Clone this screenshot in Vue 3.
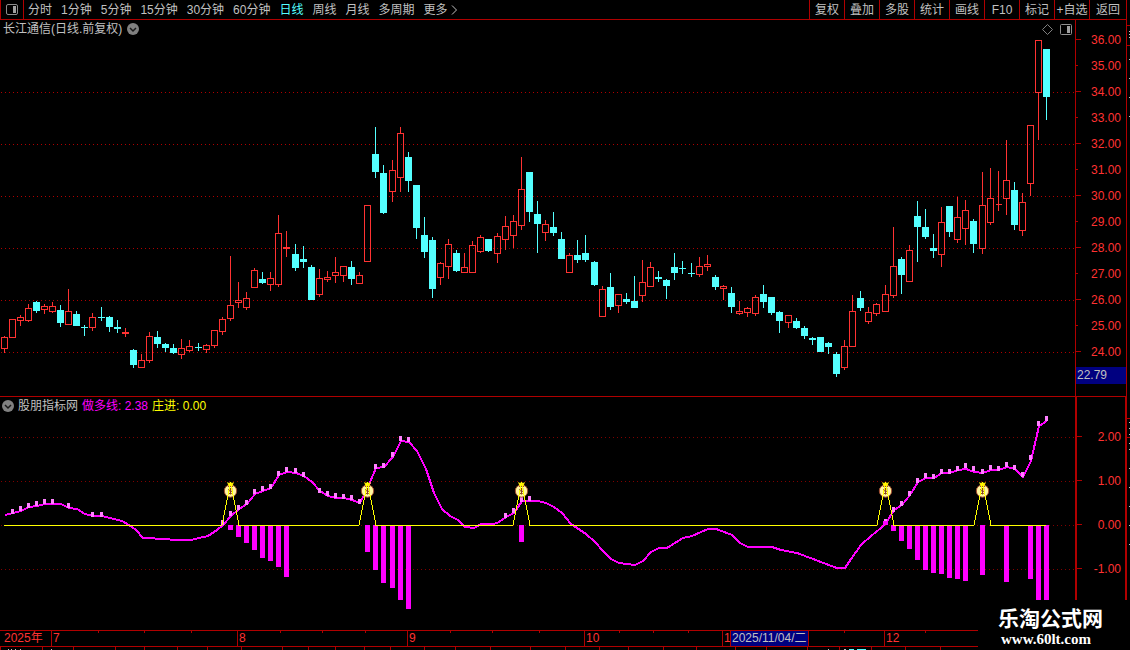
<script setup>
import { ref, computed } from 'vue'

const periods = ['分时', '1分钟', '5分钟', '15分钟', '30分钟', '60分钟', '日线', '周线', '月线', '多周期']
const activePeriod = ref('日线')
const tools = ['复权', '叠加', '多股', '统计', '画线', 'F10', '标记', '+自选', '返回']

const prices = [36, 35, 34, 33, 32, 31, 30, 29, 28, 27, 26, 25, 24]
const levels = [2, 1, 0, -1]

const months = ['2025年', '7', '8', '9', '10', '1', '12']
const weekTicks = [98, 144, 191, 280, 322, 365, 450, 492, 539, 619, 653, 688, 844, 925]
const lowerTicks = [0, 42, 73, 115, 144, 177, 207, 241, 282, 308, 335, 364, 390, 424, 455, 490, 530, 565, 599, 628, 663, 696, 735, 766, 807, 839, 871, 905, 940]

// high, body top, body bottom, low, 1 = up / 0 = down
const candles = [
  [336, 337, 349, 353, 1], [319, 319, 338, 338, 1], [315, 317, 321, 326, 1], [304, 308, 321, 322, 1],
  [301, 302, 311, 313, 0], [304, 306, 310, 314, 1], [302, 306, 312, 313, 1], [305, 310, 323, 327, 0],
  [289, 311, 325, 325, 1], [311, 314, 326, 326, 0], [325, 327, 328, 336, 0], [313, 317, 328, 331, 1],
  [307, 317, 318, 321, 0], [316, 317, 327, 332, 0], [320, 327, 329, 333, 0], [328, 332, 334, 337, 1],
  [349, 350, 365, 368, 0], [354, 360, 368, 368, 1], [332, 336, 361, 363, 1], [331, 337, 344, 348, 0],
  [343, 344, 348, 352, 0], [344, 348, 353, 354, 0], [339, 348, 355, 359, 1], [340, 346, 351, 352, 1],
  [343, 347, 348, 351, 0], [344, 345, 350, 353, 1], [330, 330, 346, 348, 1], [317, 319, 332, 335, 1],
  [256, 305, 319, 321, 1], [282, 300, 303, 308, 1], [292, 298, 308, 310, 1], [268, 270, 288, 288, 1],
  [272, 279, 283, 284, 0], [272, 278, 285, 291, 1], [215, 233, 285, 287, 1], [231, 247, 249, 257, 1],
  [244, 254, 268, 271, 0], [246, 259, 262, 268, 0], [265, 267, 300, 300, 0], [269, 278, 295, 297, 1],
  [271, 277, 280, 282, 1], [257, 272, 276, 283, 1], [266, 266, 276, 282, 1], [261, 267, 279, 285, 0],
  [272, 275, 284, 284, 1], [205, 205, 262, 262, 1], [127, 154, 172, 178, 0], [165, 173, 213, 214, 0],
  [160, 170, 192, 202, 1], [127, 133, 178, 192, 1], [152, 157, 181, 192, 0], [185, 185, 228, 239, 0],
  [217, 235, 252, 258, 0], [237, 240, 289, 298, 0], [262, 263, 278, 285, 1], [239, 244, 267, 279, 1],
  [250, 253, 271, 272, 0], [253, 267, 273, 273, 1], [241, 245, 273, 273, 1], [235, 237, 252, 253, 1],
  [239, 239, 251, 252, 0], [233, 236, 254, 263, 1], [216, 226, 240, 250, 1], [215, 221, 236, 248, 1],
  [157, 189, 226, 230, 1], [172, 172, 212, 222, 0], [201, 214, 224, 253, 0], [220, 224, 233, 241, 1],
  [212, 227, 233, 236, 0], [232, 239, 259, 259, 0], [253, 255, 273, 273, 1], [240, 255, 260, 263, 0],
  [235, 253, 260, 262, 0], [261, 262, 285, 286, 0], [286, 289, 317, 317, 1], [273, 287, 307, 310, 0],
  [294, 294, 306, 313, 1], [293, 299, 302, 304, 0], [276, 301, 308, 308, 0], [260, 282, 296, 302, 1],
  [262, 267, 287, 287, 1], [271, 277, 279, 282, 0], [279, 280, 286, 299, 0], [253, 267, 273, 280, 0],
  [261, 268, 269, 274, 0], [263, 273, 274, 277, 0], [257, 266, 275, 277, 1], [255, 264, 267, 271, 1],
  [275, 277, 287, 290, 0], [285, 286, 289, 300, 1], [287, 293, 307, 313, 0], [301, 311, 314, 315, 1],
  [307, 308, 313, 317, 1], [295, 297, 314, 316, 1], [285, 294, 302, 308, 0], [297, 297, 313, 315, 0],
  [311, 312, 321, 333, 0], [315, 315, 323, 328, 1], [318, 321, 328, 329, 0], [326, 328, 336, 339, 0],
  [337, 338, 340, 345, 0], [337, 337, 352, 352, 0], [342, 343, 347, 354, 0], [352, 354, 374, 377, 0],
  [340, 346, 368, 370, 1], [295, 311, 347, 347, 1], [291, 298, 308, 311, 0], [307, 312, 322, 324, 1],
  [303, 304, 314, 316, 1], [285, 294, 312, 312, 1], [227, 266, 296, 298, 1], [257, 259, 275, 294, 0],
  [245, 250, 282, 282, 1], [201, 216, 227, 262, 0], [209, 227, 237, 239, 0], [234, 248, 251, 258, 0],
  [207, 222, 255, 267, 1], [206, 206, 232, 237, 0], [197, 217, 240, 243, 1], [200, 210, 229, 245, 1],
  [219, 221, 244, 253, 0], [172, 205, 249, 254, 1], [168, 198, 223, 225, 1], [171, 204, 205, 211, 1],
  [140, 180, 199, 215, 1], [182, 190, 225, 230, 0], [193, 202, 231, 236, 1], [125, 125, 184, 196, 1],
  [40, 40, 93, 140, 1], [49, 49, 97, 120, 0],
]

const barX = (i) => Math.floor(4.079 + i * 8.082)

const shapes = computed(() => candles.map(([high, top, bottom, low, up], i) => {
  const x = barX(i)
  let wick = ''
  if (high < top) wick += `M${x + 0.5} ${high}V${top}`
  if (low > bottom) wick += `M${x + 0.5} ${bottom}V${low}`
  const body = up
    ? `M${x - 2.5} ${top + 0.5}h6V${bottom - 0.5}h-6Z`
    : `M${x - 3} ${top}h7V${bottom}h-7Z`
  return { wick, body, up }
}))

// indicator line
const trend = [
  [4, 515], [12, 513], [20, 511], [28, 507], [36, 506], [44, 504], [52, 504], [60, 504], [68, 508], [76, 509],
  [84, 514], [92, 516], [101, 516], [113, 519], [121, 521], [128, 525], [135, 530], [142, 538], [165, 539],
  [173, 540], [190, 540], [198, 538], [207, 536], [216, 530], [222, 525], [230, 516], [238, 509], [246, 504],
  [254, 494], [262, 491], [270, 488], [278, 475], [286, 472], [295, 473], [303, 476], [311, 482], [319, 491],
  [327, 496], [335, 498], [343, 498], [351, 500], [359, 503], [367, 487], [375, 468], [383, 467], [392, 457],
  [400, 441], [408, 442], [416, 451], [425, 469], [433, 493], [441, 509], [449, 516], [457, 520], [464, 527],
  [473, 528], [480, 524], [493, 524], [498, 522], [505, 517], [513, 513], [521, 501], [529, 501], [537, 501],
  [545, 503], [553, 507], [561, 513], [570, 524], [585, 534], [594, 542], [602, 551], [610, 559], [618, 563],
  [634, 565], [642, 561], [650, 552], [658, 548], [666, 548], [682, 538], [691, 536], [707, 529], [715, 529],
  [731, 535], [739, 543], [747, 547], [771, 547], [780, 550], [796, 553], [812, 559], [836, 568], [844, 568],
  [850, 559], [860, 545], [870, 536], [880, 528], [885, 523], [893, 510], [901, 505], [909, 495], [917, 482],
  [925, 478], [933, 478], [941, 473], [949, 473], [957, 470], [965, 469], [973, 472], [982, 473], [990, 470],
  [998, 470], [1006, 467], [1014, 469], [1022, 477], [1030, 461], [1038, 426], [1046, 421],
]
const trendPoints = trend.map(([x, y]) => `${x + 1},${y}`).join(' ')

const marks = [
  [12, 509], [20, 506], [28, 503], [36, 501], [44, 499], [52, 499], [68, 503], [92, 512], [101, 512],
  [222, 520], [230, 511], [238, 505], [246, 500], [254, 489], [262, 486], [270, 484], [278, 471], [286, 467],
  [295, 468], [303, 472], [319, 488], [327, 491], [335, 493], [343, 494], [351, 495], [359, 499], [375, 464],
  [383, 463], [392, 452], [400, 436], [408, 437], [505, 513], [513, 508], [521, 497], [529, 496],
  [885, 519], [893, 507], [901, 501], [909, 491], [917, 478], [925, 473], [933, 474], [941, 469], [949, 469],
  [957, 466], [965, 463], [973, 466], [982, 469], [990, 465], [998, 466], [1006, 462], [1014, 465],
  [1022, 472], [1030, 455], [1038, 421], [1046, 416],
]

const bars = [
  [230, 530], [238, 537], [246, 543], [254, 550], [262, 558], [270, 561], [278, 567], [286, 577],
  [367, 552], [375, 570], [383, 583], [392, 588], [400, 600], [408, 609], [521, 542],
  [893, 531], [901, 541], [909, 549], [917, 560], [925, 570], [933, 573], [941, 574], [949, 578],
  [957, 579], [965, 581], [982, 575], [1006, 582], [1030, 579], [1038, 600], [1046, 600],
]

const signals = [230, 367, 521, 885, 982]
const signalPath = 'M4 525.5' + signals.map((x) => `H${x - 8}L${x + 0.5} 482L${x + 9} 525.5`).join('') + 'H1046'
</script>

<template>
  <div class="terminal">
    <header class="topbar">
      <button class="panel-btn" aria-label="侧栏">
        <svg width="12" height="12" viewBox="0 0 12 12">
          <rect x="0.5" y="0.5" width="11" height="10" rx="1.5" fill="none" stroke="#8c8c8c" />
          <rect x="7" y="2" width="3" height="7" fill="#a0a0a0" />
        </svg>
      </button>
      <nav class="periods">
        <button
          v-for="p in periods"
          :key="p"
          :class="{ active: p === activePeriod }"
          @click="activePeriod = p"
        >{{ p }}</button>
        <button class="more">
          更多
          <svg width="7" height="10" viewBox="0 0 7 10"><path d="M1 0.5L5.5 5L1 9.5" fill="none" stroke="#c0c0c0" /></svg>
        </button>
      </nav>
      <div class="tools">
        <button v-for="t in tools" :key="t">{{ t }}</button>
      </div>
    </header>

    <section class="pane price">
      <div class="plot">
        <svg class="chart" viewBox="0 20 1075 376" preserveAspectRatio="none" shape-rendering="crispEdges">
          <path v-for="y in [92, 144, 196, 248, 300, 352]" :key="y" class="grid" :d="`M1 ${y + 0.5}H1075`" />
          <g v-for="(c, i) in shapes" :key="i" :class="c.up ? 'up' : 'down'">
            <path v-if="c.wick" class="wick" :d="c.wick" />
            <path class="body" :d="c.body" />
          </g>
        </svg>
        <div class="caption">
          <span>长江通信(日线.前复权)</span>
          <button class="round" aria-label="展开">
            <svg width="12" height="12" viewBox="0 0 12 12">
              <circle cx="6" cy="6" r="6" fill="#808080" />
              <path d="M3 5L6 8L9 5" fill="none" stroke="#181818" stroke-width="1.5" />
            </svg>
          </button>
        </div>
        <div class="corner">
          <svg width="11" height="11" viewBox="0 0 11 11">
            <path d="M5.5 0.5L10.5 5.5L5.5 10.5L0.5 5.5Z" fill="none" stroke="#808080" />
          </svg>
          <svg width="12" height="11" viewBox="0 0 12 11">
            <rect x="0.5" y="0.5" width="11" height="10" rx="1" fill="none" stroke="#909090" />
            <rect x="7" y="2" width="3" height="7" fill="#a0a0a0" />
          </svg>
        </div>
      </div>
      <div class="axis">
        <span v-for="p in prices" :key="p" :class="{ minor: p % 2 }">{{ p.toFixed(2) }}</span>
        <output class="cursor-price">22.79</output>
      </div>
    </section>

    <section class="pane indicator">
      <div class="plot">
        <svg class="chart" viewBox="0 397 1075 233" preserveAspectRatio="none" shape-rendering="crispEdges">
          <path v-for="y in [437, 481, 525, 569]" :key="y" class="grid dim" :d="`M1 ${y + 0.5}H1075`" />
          <polyline class="trend" :points="trendPoints" />
          <rect v-for="[x, y] in marks" :key="x" class="mark" :x="x - 1" :y="y" width="3" height="5" />
          <rect class="bar" x="883" y="521" width="5" height="4" />
          <rect v-for="[x, y] in bars" :key="x" class="bar" :x="x - 2" y="525" width="5" :height="y - 525" />
          <g v-for="x in signals" :key="x" :transform="`translate(${x - 6} 481)`" shape-rendering="auto">
            <circle cx="6.5" cy="10" r="6.2" fill="#fff6a0" stroke="#a04a30" />
            <path d="M3 1L5 2L6.500 1L8 2L10 1L8.500 5H4.500Z" fill="#ffe800" />
            <path d="M4 5.500H9" stroke="#a04a30" />
            <path d="M8.500 8H5.500Q4.500 8 4.500 9Q4.500 10 6.500 10Q8.500 10 8.500 11.500Q8.500 12.500 7.500 12.500H4.500M6.500 7V13.500" fill="none" stroke="#8a4420" />
          </g>
          <path class="signal" :d="signalPath" />
        </svg>
        <div class="caption">
          <button class="round" aria-label="展开">
            <svg width="12" height="12" viewBox="0 0 12 12">
              <circle cx="6" cy="6" r="6" fill="#808080" />
              <path d="M3 5L6 8L9 5" fill="none" stroke="#181818" stroke-width="1.5" />
            </svg>
          </button>
          <span>股朋指标网</span>
          <span class="magenta">做多线: 2.38</span>
          <span class="yellow">庄进: 0.00</span>
        </div>
      </div>
      <div class="axis">
        <span v-for="l in levels" :key="l">{{ l.toFixed(2) }}</span>
      </div>
    </section>

    <footer class="timeline">
      <svg class="chart ticks" viewBox="0 0 1130 15" preserveAspectRatio="none" shape-rendering="crispEdges">
        <rect v-for="x in weekTicks" :key="x" :x="x" y="0" width="1" height="2" />
      </svg>
      <span v-for="m in months" :key="m" class="month">
        {{ m }}
        <time v-if="m === '1'" class="cursor-date" datetime="2025-11-04">2025/11/04/二</time>
      </span>
    </footer>

    <svg class="chart below" viewBox="0 0 1130 3" preserveAspectRatio="none" shape-rendering="crispEdges">
      <rect v-for="x in lowerTicks" :key="x" :x="x" y="0" width="1" height="3" fill="#b00000" />
      <path d="M8 2.500h1m2 0h1m3 0h1m4 0h1m30 0h1M828 2.500h1m15 0h2" stroke="#c0c0c0" />
      <path d="M849 2.500h5m3 0h9" stroke="#54ffff" />
    </svg>

    <svg class="edge" viewBox="0 0 3 600" preserveAspectRatio="none" shape-rendering="crispEdges">
      <path d="M0 25.500H3M0 45.500H3M0 418.500H3M0 437.500H3" stroke="#b00000" />
      <path d="M2.500 31v1m0 2v1m0 2v1m0 21v1m0 18v1m0 18v1m0 18v1m0 305v1m0 5v1m0 5v1m0 8v1m0 5v1m0 18v1m0 18v1m0 18v1m0 18v1m0 18v1" stroke="#c0c0c0" />
    </svg>

    <aside class="watermark">
      <strong>乐淘公式网</strong>
      <a href="#">www.60lt.com</a>
    </aside>
  </div>
</template>

<style>
body {
  margin: 0;
  background: #000;
}
</style>

<style scoped>
.terminal {
  position: relative;
  display: grid;
  grid-template-columns: minmax(0, 1fr);
  grid-template-rows: 20px minmax(0, 377fr) minmax(0, 233fr) 17px 3px;
  height: 100vh;
  overflow: hidden;
  background: #000;
  color: #c0c0c0;
  font-family: "Liberation Sans", "Noto Sans CJK SC", sans-serif;
  font-size: 12px;
  line-height: 18px;
}

button {
  padding: 0;
  border: 0;
  background: none;
  color: inherit;
  font: inherit;
  white-space: nowrap;
  cursor: pointer;
}

.topbar {
  display: flex;
  box-sizing: border-box;
  margin-right: 3px;
  border: solid #b00000;
  border-width: 0 1px 1px;
}

.panel-btn {
  display: flex;
  align-items: center;
  justify-content: center;
  width: 23px;
  border-right: 1px solid #b00000;
}

.periods {
  display: flex;
  flex: 1;
  gap: 9px;
  padding-left: 4px;
}

.periods .active {
  color: #54ffff;
}

.more {
  display: flex;
  align-items: center;
  gap: 3px;
}

.tools {
  display: flex;
}

.tools button {
  width: 35px;
  border-left: 1px solid #b00000;
}

.tools button:last-child {
  width: 37px;
}

.pane {
  display: grid;
  grid-template-columns: minmax(0, 1fr) 52px;
  grid-template-rows: minmax(0, 1fr);
  margin-right: 3px;
}

.price {
  border-bottom: 1px solid #b00000;
}

.plot {
  position: relative;
}

.chart {
  display: block;
  width: 100%;
  height: 100%;
}

.grid {
  stroke: #b00000;
  stroke-dasharray: 1 3;
}

.grid.dim {
  stroke: #800000;
}

.up path {
  fill: none;
  stroke: #ff3232;
}

.down .wick {
  stroke: #54ffff;
}

.down .body {
  fill: #54ffff;
}

.trend {
  fill: none;
  stroke: #ff00ff;
  stroke-width: 2;
}

.mark {
  fill: #ff80ff;
}

.bar {
  fill: #ff00ff;
}

.signal {
  fill: none;
  stroke: #ffff00;
}

.caption {
  position: absolute;
  top: 0;
  left: 0;
  display: flex;
  align-items: center;
  gap: 5px;
  padding-left: 3px;
}

.indicator .caption {
  padding-left: 2px;
  gap: 4px;
}

.round {
  display: flex;
}

.magenta {
  color: #ff00ff;
}

.yellow {
  color: #ffff00;
}

.corner {
  position: absolute;
  top: 4px;
  right: 3px;
  display: flex;
  gap: 7px;
}

.axis {
  position: relative;
  display: flex;
  flex-direction: column;
  box-sizing: border-box;
  padding: 7px 5px 31px 0;
  border: solid #b00000;
  border-width: 0 1px;
  color: #ff3232;
  text-align: right;
}

.indicator .axis {
  padding: 18px 4px 39px 0;
  border-width: 0 2px;
}

.axis span {
  position: relative;
  display: flex;
  flex: 1;
  align-items: center;
  justify-content: flex-end;
}

.axis span::before {
  content: "";
  position: absolute;
  top: 50%;
  left: 0;
  width: 5px;
  height: 1px;
  margin-top: -1px;
  background: #b00000;
}

.axis .minor::before {
  width: 2px;
}

.cursor-price {
  position: absolute;
  right: 0;
  bottom: 12px;
  left: 0;
  padding-left: 1px;
  background: #000080;
  color: #c0c0c0;
  line-height: 17px;
  text-align: left;
}

.timeline {
  position: relative;
  display: grid;
  grid-template-columns: 51fr 186fr 170fr 177fr 138fr 162fr 246fr;
  border: solid #b00000;
  border-width: 1px 0;
  color: #ff3232;
  line-height: 15px;
}

.ticks {
  position: absolute;
  fill: #b00000;
}

.month {
  position: relative;
  padding-left: 1px;
  border-left: 1px solid #b00000;
}

.month:nth-of-type(1) {
  padding-left: 4px;
  border-left: 0;
}

.cursor-date {
  position: absolute;
  top: 0;
  left: 7px;
  padding: 0 1px;
  border: solid #b00000;
  border-width: 0 1px;
  background: #000080;
  color: #c0c0c0;
}

.edge {
  position: absolute;
  top: 0;
  right: 0;
  width: 3px;
  height: calc(100% - 50px);
}

.watermark {
  position: absolute;
  right: 0;
  bottom: 0;
  display: flex;
  flex-direction: column;
  box-sizing: border-box;
  width: 152px;
  height: 50px;
  padding: 7px 0 0 20px;
  background: #000;
  color: #fff;
}

.watermark strong {
  font-size: 21px;
  line-height: 23px;
}

.watermark a {
  padding-left: 3px;
  color: inherit;
  font: bold 15px/18px "Liberation Serif", serif;
  text-decoration: none;
}
</style>
